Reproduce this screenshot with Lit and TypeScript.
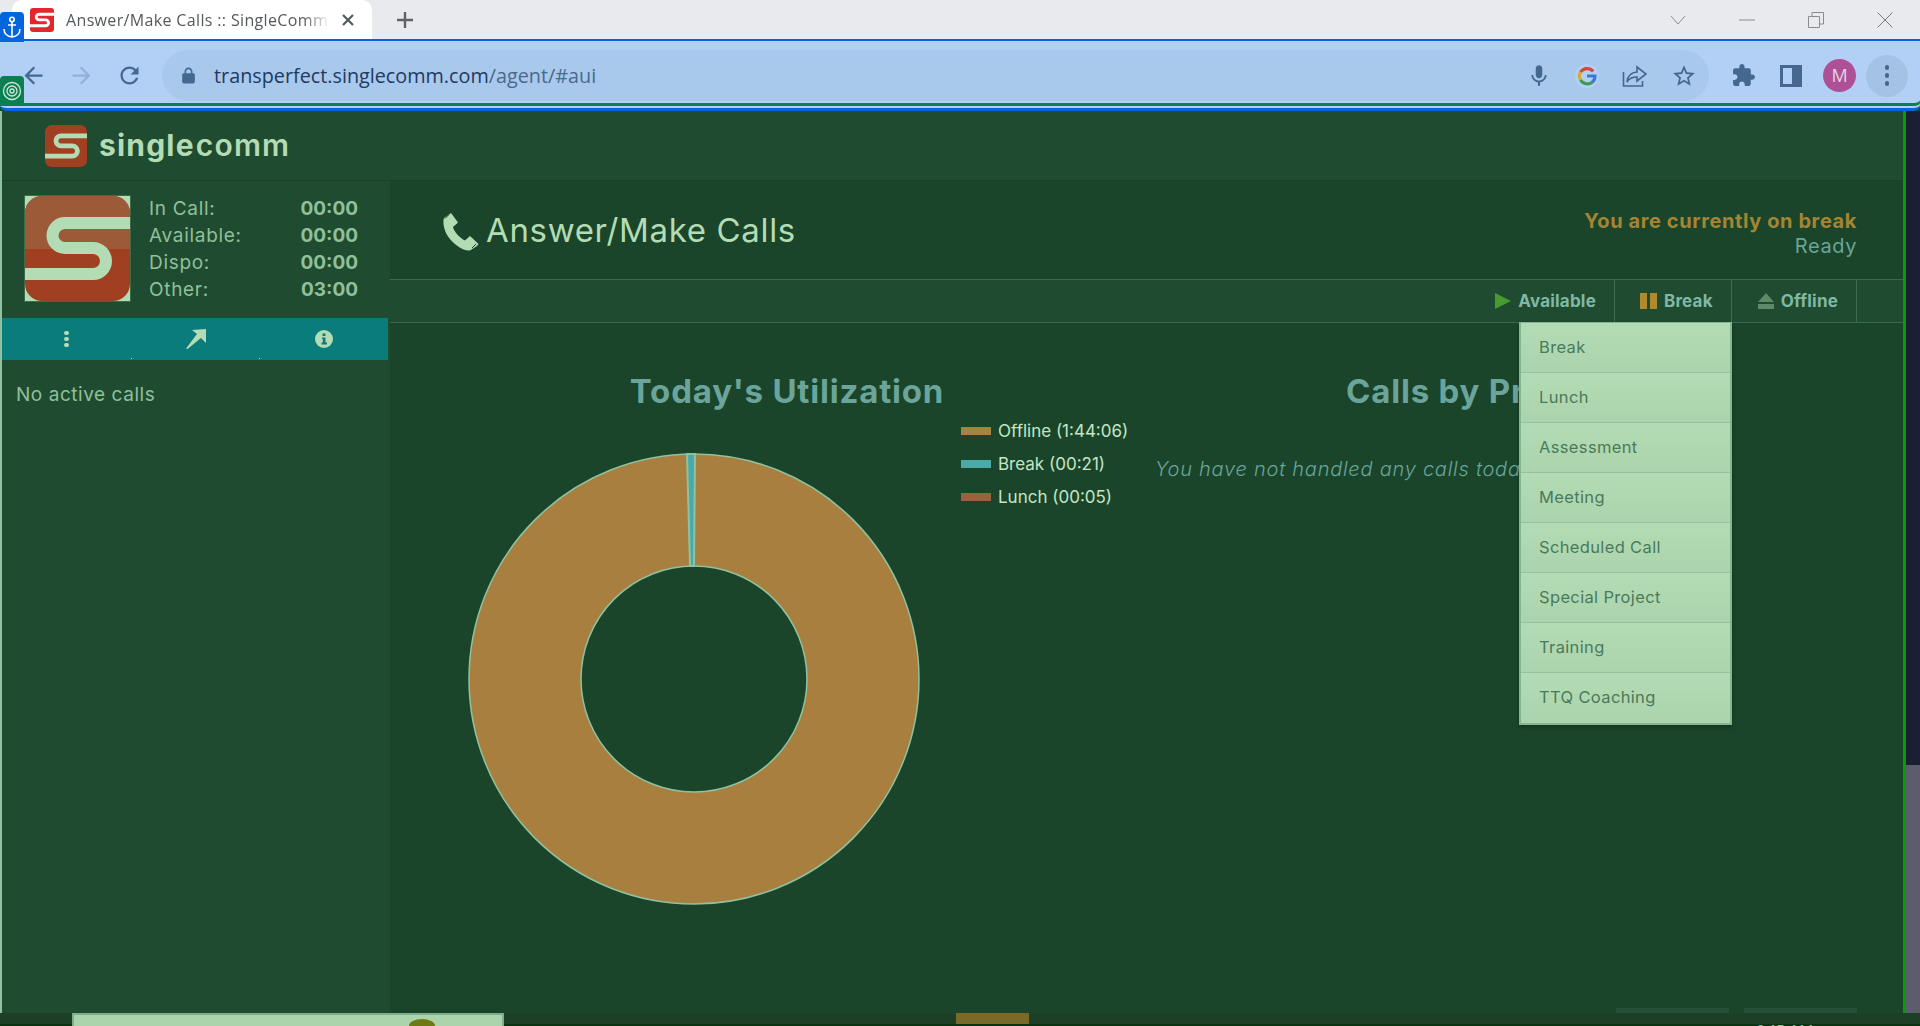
import { css, html, LitElement, svg } from "lit";
import { customElement } from "lit/decorators.js";

const STATS = [
  ["In Call:", "00:00"],
  ["Available:", "00:00"],
  ["Dispo:", "00:00"],
  ["Other:", "03:00"],
];
const LEGEND = [
  ["#a88340", "Offline (1:44:06)"],
  ["#4aa9a9", "Break (00:21)"],
  ["#98623c", "Lunch (00:05)"],
];
const MENU = [
  "Break",
  "Lunch",
  "Assessment",
  "Meeting",
  "Scheduled Call",
  "Special Project",
  "Training",
  "TTQ Coaching",
];

const SPATH = "M105 27H40a12.5 12.5 0 0 0 0 25H68a13 13 0 0 1 0 26H0";

@customElement("app-root")
class AppRoot extends LitElement {
  private icon(d: string, size = 24) {
    return html`<svg class="ti" width=${size} height=${size} viewBox="0 0 24 24">
      <path d=${d}></path>
    </svg>`;
  }

  private logo(size: number, corners: boolean) {
    return html`<svg width=${size} height=${size} viewBox="0 0 105 105">
      ${corners ? svg`<rect width="105" height="105" fill="#b4dcb4"></rect>` : ""}
      <rect width="105" height="105" rx="17" fill="#a04020"></rect>
      ${corners
        ? svg`<path d="M0 53V17A17 17 0 0 1 17 0H88A17 17 0 0 1 105 17V53Z" fill="#9c5a38"></path>`
        : ""}
      <path d=${SPATH} fill="none" stroke="#b4dcb4" stroke-width="12"></path>
    </svg>`;
  }

  private renderBrowser() {
    return html`
      <div class="tabs">
        <div class="tab">
          <svg width="24" height="24" viewBox="0 0 105 105">
            <rect width="105" height="105" rx="14" fill="#e2282c"></rect>
            <path d=${SPATH} fill="none" stroke="#fff" stroke-width="13"></path>
          </svg>
          <span class="tab-title">Answer/Make Calls :: SingleComm</span>
          <svg class="tab-x" width="14" height="14" viewBox="0 0 14 14">
            <path d="M2 2l10 10M12 2L2 12" stroke="#55585e" stroke-width="2.2"></path>
          </svg>
        </div>
        <svg class="plus" width="20" height="20" viewBox="0 0 20 20">
          <path d="M10 2v16M2 10h16" stroke="#5f6368" stroke-width="2.4"></path>
        </svg>
        <div class="win">
          <svg width="16" height="10" viewBox="0 0 16 10">
            <path d="M1 1l7 8 7-8" fill="none" stroke="#8a8c90" stroke-width="1"></path>
          </svg>
          <svg width="16" height="10" viewBox="0 0 16 10">
            <path d="M0 5h16" stroke="#8a8c90" stroke-width="1"></path>
          </svg>
          <svg width="16" height="16" viewBox="0 0 16 16">
            <path d="M.5 4.5h11v11H.5zM4 4.5V.5h11.5V12h-4" fill="none" stroke="#8a8c90"></path>
          </svg>
          <svg width="16" height="16" viewBox="0 0 16 16">
            <path d="M.5.5l15 15M15.5.5l-15 15" stroke="#77797d"></path>
          </svg>
        </div>
      </div>
      <div class="toolbar">
        <div class="nav">
          ${this.icon("M20 11H7.83l5.59-5.59L12 4l-8 8 8 8 1.41-1.41L7.83 13H20v-2z", 27)}
          <span class="dim">${this.icon("M4 11h12.17l-5.59-5.59L12 4l8 8-8 8-1.41-1.41L16.17 13H4v-2z", 27)}</span>
          ${this.icon("M17.65 6.35C16.2 4.9 14.21 4 12 4c-4.42 0-7.99 3.58-7.99 8s3.57 8 7.99 8c3.73 0 6.84-2.55 7.73-6h-2.08c-.82 2.33-3.04 4-5.65 4-3.31 0-6-2.69-6-6s2.69-6 6-6c1.66 0 3.14.69 4.22 1.78L13 11h7V4l-2.35 2.35z", 27)}
        </div>
        <div class="omni">
          ${this.icon("M18 9h-1V7c0-2.76-2.24-5-5-5S7 4.24 7 7v2H6c-1.1 0-2 .9-2 2v9c0 1.1.9 2 2 2h12c1.1 0 2-.9 2-2v-9c0-1.1-.9-2-2-2zM9 9V7c0-1.66 1.34-3 3-3s3 1.34 3 3v2H9z", 19)}
          <span class="url">transperfect.singlecomm.com<span class="url-path">/agent/#aui</span></span>
          <div class="omni-icons">
            ${this.icon("M12 14c1.66 0 2.99-1.34 2.99-3L15 5c0-1.66-1.34-3-3-3S9 3.34 9 5v6c0 1.66 1.34 3 3 3zm5.3-3c0 3-2.54 5.1-5.3 5.1S6.7 14 6.7 11H5c0 3.41 2.72 6.23 6 6.72V21h2v-3.28c3.28-.48 6-3.3 6-6.72h-1.7z", 26)}
            <svg class="g" width="24" height="24" viewBox="0 0 24 24">
              <circle cx="12" cy="12" r="12" fill="#b2d0f5"></circle>
              <g fill="none" stroke-width="3.2">
                <path d="M18.2 7.4A8 8 0 0 0 5.5 8" stroke="#d8483a"></path>
                <path d="M5.5 8a8 8 0 0 0 0 8" stroke="#d4ad2c"></path>
                <path d="M5.5 16a8 8 0 0 0 12 2" stroke="#3f9a52"></path>
                <path d="M12 12h8a8 8 0 0 1-2.6 6" stroke="#3a78d8"></path>
              </g>
            </svg>
            <svg width="26" height="24" viewBox="0 0 26 24">
              <path d="M1.5 8v14h19v-5" fill="none" stroke="#44688f" stroke-width="1.6"></path>
              <path d="M15 3l9 7-9 7v-4c-5 0-8 1.5-10 5 .5-6 4-9.5 10-10z" fill="none" stroke="#44688f" stroke-width="1.6"></path>
            </svg>
            ${this.icon("M22 9.24l-7.19-.62L12 2 9.19 8.63 2 9.24l5.46 4.73L5.82 21 12 17.27 18.18 21l-1.63-7.03L22 9.24zM12 15.4l-3.76 2.27 1-4.28-3.32-2.88 4.38-.38L12 6.1l1.71 4.04 4.38.38-3.32 2.88 1 4.28L12 15.4z", 26)}
          </div>
        </div>
        <div class="ext">
          ${this.icon("M20.5 11H19V7c0-1.1-.9-2-2-2h-4V3.5C13 2.12 11.88 1 10.5 1S8 2.12 8 3.5V5H4c-1.1 0-1.99.9-1.99 2v3.8H3.5c1.49 0 2.7 1.21 2.7 2.7s-1.21 2.7-2.7 2.7H2V20c0 1.1.9 2 2 2h3.8v-1.5c0-1.49 1.21-2.7 2.7-2.7 1.49 0 2.7 1.21 2.7 2.7V22H17c1.1 0 2-.9 2-2v-4h1.5c1.38 0 2.5-1.12 2.5-2.5S21.88 11 20.5 11z", 25)}
          <svg width="22" height="22" viewBox="0 0 22 22">
            <path fill-rule="evenodd" d="M0 0h22v22H0zM3 3v16h9V3z" fill="#44688f"></path>
          </svg>
          <span class="avatar">M</span>
          <span class="kebab"><i></i><i></i><i></i></span>
        </div>
      </div>
      <div class="badge anchor">
        <svg width="18" height="22" viewBox="0 0 18 22" fill="none" stroke="#fff" stroke-width="1.6">
          <circle cx="9" cy="3.5" r="2.2"></circle>
          <path d="M9 6v15M5 9h8M1 13c0 5 4 7.5 8 8 4-.5 8-3 8-8"></path>
        </svg>
      </div>
      <div class="badge target">
        <svg width="20" height="20" viewBox="0 0 20 20" fill="none" stroke="#cfe6d8" stroke-width="1.3">
          <circle cx="10" cy="10" r="8.5"></circle>
          <circle cx="10" cy="10" r="5"></circle>
          <circle cx="10" cy="10" r="2"></circle>
        </svg>
      </div>
    `;
  }

  private renderSidebar() {
    return html`
      <aside class="side">
        <div class="user">
          <div class="user-logo">${this.logo(105, true)}</div>
          <div class="stats">
            ${STATS.map(
              ([k, v]) => html`<div class="stat"><span>${k}</span><b>${v}</b></div>`
            )}
          </div>
        </div>
        <div class="teal">
          <span class="dots"><i></i><i></i><i></i></span>
          <svg width="20" height="20" viewBox="0 0 20 20">
            <path d="M20 0v14l-5-5L1.500 20l-1.500-.5L11 5 6 1z" fill="#b4dcb4"></path>
          </svg>
          <svg width="18" height="18" viewBox="0 0 18 18">
            <circle cx="9" cy="9" r="9" fill="#b4dcb4"></circle>
            <path d="M7.5 3.5h3v2.5h-3zM7 7.5h3.5v5H12V14.500H6.500V12.500H7.800V9H7z" fill="#0b7c7c"></path>
          </svg>
        </div>
        <div class="no-calls">No active calls</div>
      </aside>
    `;
  }

  private renderMain() {
    return html`
      <main class="main">
        <div class="title-row">
          <svg class="phone" width="36" height="38" viewBox="0 0 36 38">
            <path d="M8 0L15 9.500L10 14C11 19 17 25 22 27.500L27 23L35.500 31L34 33L27 37.500C20 38.500 8 30 3 20C0 13 0 8 1 5Z" fill="#b4dcb4"></path>
            <path d="M6 1.500L2 5.500M29 35L33 31" stroke="#1a452a" stroke-width="1" fill="none"></path>
          </svg>
          <h1>Answer/Make Calls</h1>
          <div class="status">
            <strong>You are currently on break</strong>
            <span>Ready</span>
          </div>
        </div>
        <div class="actions">
          <button class="act">
            <svg width="16" height="16" viewBox="0 0 16 16"><path d="M0 0l16 8-16 8z" fill="#4a9a32"></path></svg>
            Available
          </button>
          <button class="act">
            <svg width="17" height="16" viewBox="0 0 17 16"><path d="M0 0h7v16H0zM10 0h7v16h-7z" fill="#b08a2c"></path></svg>
            Break
          </button>
          <button class="act last">
            <svg width="16" height="16" viewBox="0 0 16 16"><path d="M8 0l8 9H0zM0 11h16v5H0z" fill="#5f8a68"></path></svg>
            Offline
          </button>
        </div>
        <div class="content">
          <section class="util">
            <h2 class="util-h">Today's Utilization</h2>
            <div class="chart-row">
              <svg class="donut" width="452" height="452" viewBox="-226 -226 452 452">
                <circle r="169" fill="none" stroke="#a87f3f" stroke-width="112"></circle>
                <path d="M-4 -113L-7 -225H1L0 -113Z" fill="#4aa9a9" stroke="#8fc2a0" stroke-width="2"></path>
                <circle r="225" fill="none" stroke="#8fc2a0" stroke-width="1.500"></circle>
                <circle r="113" fill="none" stroke="#8fc2a0" stroke-width="1.500"></circle>
              </svg>
              <ul class="legend">
                ${LEGEND.map(
                  ([c, t]) => html`<li><i style="background:${c}"></i>${t}</li>`
                )}
              </ul>
            </div>
          </section>
          <section class="calls">
            <h2>Calls by Project</h2>
            <p>You have not handled any calls today</p>
          </section>
          <ul class="menu">
            ${MENU.map((m) => html`<li>${m}</li>`)}
          </ul>
        </div>
        <div class="stubs"><i></i><i></i></div>
      </main>
    `;
  }

  render() {
    return html`
      <div class="browser">${this.renderBrowser()}</div>
      <div class="page">
        <div class="app">
          <header class="brand">
            ${this.logo(42, false)}
            <span class="word">single<span>comm</span></span>
          </header>
          <div class="body">${this.renderSidebar()}${this.renderMain()}</div>
        </div>
        <div class="rail"><div class="thumb"></div></div>
      </div>
      <footer class="taskbar">
        <div class="search"><i></i></div>
        <div class="app-block"></div>
        <span class="clock">9:15 AM</span>
      </footer>
    `;
  }

  static styles = css`
    :host {
      display: flex;
      flex-direction: column;
      width: 1920px;
      height: 1026px;
      overflow: hidden;
      position: relative;
      font-family: Inter, "Liberation Sans", sans-serif;
      background: #1a452a;
    }
    .browser {
      flex: none;
      position: relative;
      height: 111px;
      display: flex;
      flex-direction: column;
    }
    .tabs {
      height: 39px;
      flex: none;
      background: #e8eaee;
      display: flex;
      align-items: center;
    }
    .tab {
      margin-left: 12px;
      width: 360px;
      height: 39px;
      background: #fff;
      border-radius: 10px 10px 0 0;
      display: flex;
      align-items: center;
      padding-left: 18px;
      box-sizing: border-box;
    }
    .tab-title {
      margin-left: 12px;
      width: 264px;
      overflow: hidden;
      white-space: nowrap;
      font: 16px "Open Sans", sans-serif;
      letter-spacing: 0.35px;
      color: #55585e;
      -webkit-mask-image: linear-gradient(90deg, #000 90%, transparent);
      mask-image: linear-gradient(90deg, #000 90%, transparent);
    }
    .tab-x {
      margin-left: 11px;
    }
    .plus {
      margin-left: 23px;
    }
    .win {
      margin-left: auto;
      display: flex;
      align-items: center;
      gap: 53px;
      padding-right: 27px;
    }
    .toolbar {
      flex: 1;
      position: relative;
      background: #b2d0f5;
      border-top: 2px solid #0066dd;
      border-bottom: 3px solid #0066dd;
      box-shadow: inset 0 -2px 0 #b2d0f5, inset 0 -5px 0 #0a8050;
      display: flex;
      align-items: flex-start;
      padding-top: 9px;
      box-sizing: border-box;
      border-radius: 0 0 6px 6px;
    }
    .ti path {
      fill: #44688f;
    }
    .dim .ti path {
      fill: #8fb0d8;
    }
    .dim {
      display: flex;
    }
    .nav {
      display: flex;
      align-items: center;
      gap: 21px;
      height: 51px;
      margin-left: 20px;
    }
    .omni {
      margin-left: 19px;
      width: 1547px;
      height: 51px;
      border-radius: 26px;
      background: #a8c8ec;
      display: flex;
      align-items: center;
      padding-left: 17px;
      box-sizing: border-box;
    }
    .url {
      margin-left: 16px;
      font: 19.8px "Open Sans", sans-serif;
      color: #1f3a5f;
    }
    .url-path {
      color: #4a6a8a;
    }
    .omni-icons {
      margin-left: auto;
      margin-right: 12px;
      display: flex;
      align-items: center;
      gap: 23px;
    }
    .ext {
      display: flex;
      align-items: center;
      height: 51px;
      margin-left: 22px;
      gap: 24px;
    }
    .avatar {
      width: 33px;
      height: 33px;
      margin-left: -3px;
      border-radius: 50%;
      background: #ad5096;
      color: #e6d4e6;
      font: 18px "Open Sans", sans-serif;
      text-align: center;
      line-height: 33px;
    }
    .kebab {
      width: 42px;
      height: 42px;
      margin-left: -14px;
      border-radius: 50%;
      background: #a4c2e4;
      display: flex;
      flex-direction: column;
      align-items: center;
      justify-content: center;
      gap: 3.500px;
    }
    .kebab i {
      width: 4.500px;
      height: 4.500px;
      border-radius: 50%;
      background: #44688f;
    }
    .badge {
      position: absolute;
      left: 0;
      width: 24px;
      display: flex;
      align-items: center;
      justify-content: center;
      border-radius: 4px 4px 0 0;
    }
    .anchor {
      top: 12px;
      height: 30px;
      background: #0066dd;
    }
    .target {
      top: 76px;
      height: 30px;
      background: #0a8050;
    }
    .page {
      flex: 1;
      display: flex;
      min-height: 0;
    }
    .app {
      flex: 1;
      display: flex;
      flex-direction: column;
      min-width: 0;
      border-left: 2px solid #8fc2a0;
    }
    .rail {
      flex: none;
      width: 17px;
      background: #1a1f33;
      border-left: 3px solid #0a9a0a;
      box-sizing: border-box;
      display: flex;
      flex-direction: column;
      justify-content: flex-end;
    }
    .thumb {
      height: 248px;
      background: #5c5c6c;
    }
    .brand {
      flex: none;
      height: 70px;
      box-sizing: border-box;
      background: #1f4b30;
      border-bottom: 1px solid #1a4028;
      display: flex;
      align-items: center;
      padding-left: 43px;
      gap: 12px;
    }
    .word {
      font-size: 30px;
      font-weight: 700;
      color: #b4dcb4;
      letter-spacing: 1.2px;
      margin-top: -2px;
    }
    .word span {
      font-weight: 600;
      margin-left: 1px;
    }
    .body {
      flex: 1;
      display: flex;
      min-height: 0;
    }
    .side {
      flex: none;
      width: 388px;
      background: #1f4b30;
      color: #8fc09a;
    }
    .user {
      height: 137px;
      box-sizing: border-box;
      padding: 14px 0 0 23px;
      display: flex;
    }
    .user-logo {
      margin-top: 1px;
      height: 105px;
      outline: 1px solid #3d6b48;
    }
    .stats {
      margin-left: 19px;
      width: 209px;
    }
    .stat {
      display: flex;
      justify-content: space-between;
      height: 27px;
      line-height: 27px;
      font-size: 19px;
    }
    .stat span {
      letter-spacing: 0.7px;
    }
    .stat b {
      font-weight: 700;
    }
    .teal {
      height: 42px;
      width: 386px;
      background:
        linear-gradient(#b4dcb4, #b4dcb4) 129px 40px / 1px 1px no-repeat,
        linear-gradient(#b4dcb4, #b4dcb4) 257px 40px / 1px 1px no-repeat,
        #0b7c7c;
      display: grid;
      grid-template-columns: 129px 129px 128px;
      justify-items: center;
      align-items: center;
    }
    .dots {
      display: flex;
      flex-direction: column;
      gap: 1.500px;
    }
    .dots i {
      width: 4.500px;
      height: 4.500px;
      border-radius: 50%;
      background: #b4dcb4;
    }
    .no-calls {
      margin: 23px 0 0 14px;
      font-size: 19px;
      line-height: 24px;
      letter-spacing: 0.55px;
    }
    .main {
      flex: 1;
      min-width: 0;
      display: flex;
      flex-direction: column;
      position: relative;
    }
    .title-row {
      flex: none;
      height: 98px;
      box-sizing: border-box;
      display: flex;
      align-items: center;
      padding: 0 46px 0 53px;
    }
    .phone {
      margin-top: 4px;
    }
    h1 {
      margin: 0 0 0 7px;
      font-size: 33px;
      font-weight: 400;
      letter-spacing: 0.65px;
      color: #b4dcb4;
    }
    .status {
      margin-left: auto;
      margin-top: 7px;
      display: flex;
      flex-direction: column;
      align-items: flex-end;
      font-size: 20px;
      line-height: 25px;
      letter-spacing: 0.6px;
    }
    .status strong {
      color: #a58433;
    }
    .status span {
      color: #6ba49a;
    }
    .actions {
      flex: none;
      height: 44px;
      box-sizing: border-box;
      background: #1f4b30;
      border-top: 1px solid #3a6a4f;
      border-bottom: 1px solid #3a6a4f;
      display: flex;
      justify-content: flex-end;
      padding-right: 46px;
    }
    .act {
      all: unset;
      display: flex;
      align-items: center;
      gap: 7px;
      padding: 0 18px 0 25px;
      font-size: 17px;
      font-weight: 700;
      letter-spacing: 0.2px;
      color: #7fb8a4;
      border-right: 1px solid #3a6a4f;
    }
    .act.last {
      padding-left: 26px;
    }
    .content {
      flex: 1;
      min-height: 0;
      display: flex;
      position: relative;
    }
    .util {
      flex: none;
      width: 765px;
      padding-top: 49px;
      box-sizing: border-box;
    }
    h2 {
      margin: 0;
      font-size: 33px;
      line-height: 38px;
      font-weight: 700;
      letter-spacing: 0.8px;
      color: #6ba49a;
      white-space: nowrap;
    }
    .util-h {
      padding-left: 29px;
      text-align: center;
    }
    .chart-row {
      display: flex;
      padding-left: 78px;
    }
    .donut {
      margin-top: 43px;
      flex: none;
    }
    .legend {
      list-style: none;
      margin: 4px 0 0 41px;
      padding: 0;
      color: #c4e6c4;
      font-size: 17px;
      white-space: nowrap;
    }
    .legend li {
      height: 33px;
      display: flex;
      align-items: center;
      gap: 7px;
    }
    .legend i {
      width: 30px;
      height: 8px;
    }
    .calls {
      flex: 1;
      padding-top: 49px;
    }
    .calls h2 {
      padding-left: 191px;
    }
    .calls p {
      margin: 47px 0 0;
      font-size: 20px;
      line-height: 24px;
      letter-spacing: 0.75px;
      font-style: italic;
      font-weight: 300;
      color: #6ba49a;
    }
    .menu {
      position: absolute;
      left: 1129px;
      top: -1px;
      width: 213px;
      margin: 0;
      padding: 0;
      list-style: none;
      box-sizing: border-box;
      background: #b0d9b0;
      border: 1px solid #86b592;
      border-width: 1px 2px 2px 2px;
      box-shadow: 0 2px 4px rgba(0, 0, 0, 0.25);
    }
    .menu li {
      height: 50px;
      box-sizing: border-box;
      padding-left: 18px;
      line-height: 48px;
      font-size: 16.500px;
      letter-spacing: 0.35px;
      color: #4a7a5c;
      border-bottom: 1px solid #94c29c;
      background: linear-gradient(#b4dcb4, #acd4ac);
    }
    .menu li:last-child {
      border-bottom: none;
    }
    .stubs {
      flex: none;
      height: 5px;
      display: flex;
      justify-content: flex-end;
      gap: 15px;
      padding-right: 46px;
    }
    .stubs i {
      width: 113px;
      background: #264f3a;
    }
    .taskbar {
      flex: none;
      height: 13px;
      position: relative;
      display: flex;
      background: linear-gradient(#1c3f26 11px, #0a3312 11px);
      overflow: hidden;
    }
    .search {
      margin-left: 72px;
      width: 432px;
      height: 13px;
      box-sizing: border-box;
      background: #acd4ac;
      border: 2px solid #7fae8c;
      border-bottom: none;
      position: relative;
    }
    .search i {
      position: absolute;
      left: 335px;
      top: 4px;
      width: 26px;
      height: 14px;
      border-radius: 50% 50% 0 0;
      background: #6e7a14;
    }
    .app-block {
      margin-left: 452px;
      width: 73px;
      height: 11px;
      background: #7a6a28;
    }
    .clock {
      position: absolute;
      left: 1756px;
      top: 9px;
      font-size: 15px;
      line-height: 18px;
      color: #8fc09a;
    }
  `;
}

declare global {
  interface HTMLElementTagNameMap {
    "app-root": AppRoot;
  }
}
